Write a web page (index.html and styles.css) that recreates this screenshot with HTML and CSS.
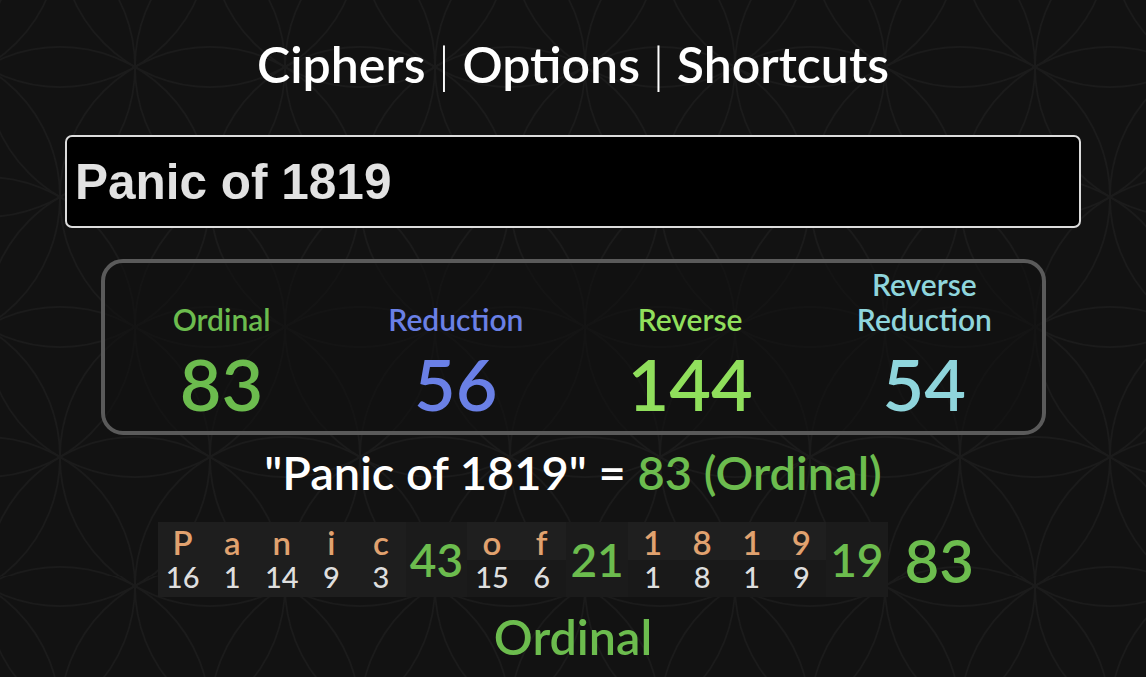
FILE: index.html
```html
<!DOCTYPE html>
<html lang="en">
<head>
<meta charset="utf-8">
<title>Gematria</title>
<link rel="stylesheet" href="styles.css">
</head>
<body>
<main class="page">
  <h1 class="menu">Ciphers <span class="sep">|</span> Options <span class="sep">|</span> Shortcuts</h1>

  <input class="phrase" type="text" value="Panic of 1819">

  <section class="ciphers">
    <div class="cipher ordinal"><div class="c-name">Ordinal</div><div class="c-val">83</div></div>
    <div class="cipher reduction"><div class="c-name">Reduction</div><div class="c-val">56</div></div>
    <div class="cipher reverse"><div class="c-name">Reverse</div><div class="c-val">144</div></div>
    <div class="cipher rev-red"><div class="c-name">Reverse<br>Reduction</div><div class="c-val">54</div></div>
  </section>

  <p class="result">"Panic of 1819" = <span class="green">83 (Ordinal)</span></p>

  <div class="breakdown">
    <div class="word">
      <div class="col"><span class="ch">P</span><span class="nv">16</span></div>
      <div class="col"><span class="ch">a</span><span class="nv">1</span></div>
      <div class="col"><span class="ch">n</span><span class="nv">14</span></div>
      <div class="col"><span class="ch">i</span><span class="nv">9</span></div>
      <div class="col"><span class="ch">c</span><span class="nv">3</span></div>
    </div>
    <div class="sum">43</div>
    <div class="word alt">
      <div class="col"><span class="ch">o</span><span class="nv">15</span></div>
      <div class="col"><span class="ch">f</span><span class="nv">6</span></div>
    </div>
    <div class="sum">21</div>
    <div class="word alt">
      <div class="col"><span class="ch">1</span><span class="nv">1</span></div>
      <div class="col"><span class="ch">8</span><span class="nv">8</span></div>
      <div class="col"><span class="ch">1</span><span class="nv">1</span></div>
      <div class="col"><span class="ch">9</span><span class="nv">9</span></div>
    </div>
    <div class="sum">19</div>
    <div class="total">83</div>
  </div>

  <div class="cipher-title">Ordinal</div>
</main>
</body>
</html>
```

FILE: styles.css
```css
html, body {
  margin: 0;
  padding: 0;
  height: 100%;
}

body {
  background-color: #121212;
  background-image: url("data:image/svg+xml,%3Csvg xmlns='http://www.w3.org/2000/svg' width='150' height='259.81' viewBox='0 0 150 259.81'%3E%3Cg fill='none' stroke='%231b1b1b' stroke-width='1.6'%3E%3Ccircle cx='-150' cy='0' r='150'/%3E%3Ccircle cx='0' cy='0' r='150'/%3E%3Ccircle cx='150' cy='0' r='150'/%3E%3Ccircle cx='300' cy='0' r='150'/%3E%3Ccircle cx='-150' cy='259.81' r='150'/%3E%3Ccircle cx='0' cy='259.81' r='150'/%3E%3Ccircle cx='150' cy='259.81' r='150'/%3E%3Ccircle cx='300' cy='259.81' r='150'/%3E%3Ccircle cx='-75' cy='-129.9' r='150'/%3E%3Ccircle cx='75' cy='-129.9' r='150'/%3E%3Ccircle cx='225' cy='-129.9' r='150'/%3E%3Ccircle cx='-75' cy='129.9' r='150'/%3E%3Ccircle cx='75' cy='129.9' r='150'/%3E%3Ccircle cx='225' cy='129.9' r='150'/%3E%3Ccircle cx='-75' cy='389.7' r='150'/%3E%3Ccircle cx='75' cy='389.7' r='150'/%3E%3Ccircle cx='225' cy='389.7' r='150'/%3E%3C/g%3E%3C/svg%3E");
  background-position: 60px -63px;
  font-family: Lato, "Open Sans", sans-serif;
  color: #fff;
  overflow: hidden;
}

.page {
  display: flex;
  flex-direction: column;
  align-items: center;
  padding-top: 35px;
}

.menu {
  margin: 0;
  font-size: 50px;
  font-weight: 600;
  line-height: 58px;
  color: #fff;
}

.menu .sep {
  font-weight: 300;
}

.phrase {
  box-sizing: border-box;
  margin-top: 42px;
  width: 1016px;
  height: 93px;
  border: 2px solid #dcdcdc;
  border-radius: 7px;
  background: #000;
  color: #e2e2e2;
  font-family: "Liberation Sans", Arial, sans-serif;
  font-weight: bold;
  font-size: 49.5px;
  padding: 0 8px;
  outline: none;
}

.ciphers {
  box-sizing: border-box;
  margin-top: 31px;
  width: 945px;
  border: 4px solid #5a5a5a;
  border-radius: 22px;
  background: rgba(16, 16, 16, 0.6);
  padding: 4px 0 12px;
  display: grid;
  grid-template-columns: repeat(4, 1fr);
}

.cipher {
  display: flex;
  flex-direction: column;
  justify-content: flex-end;
  align-items: center;
  text-align: center;
}

.c-name {
  font-size: 30px;
  font-weight: 600;
  line-height: 35px;
}

.c-val {
  margin-top: 10px;
  font-size: 72px;
  font-weight: 600;
  line-height: 72px;
}

.ordinal { color: #6cbc4e; }
.reduction { color: #6a80e6; }
.reverse { color: #90df5c; }
.rev-red { color: #8fd5dc; }

.result {
  margin: 10px 0 0;
  font-size: 47px;
  font-weight: 600;
  line-height: 54px;
  color: #fff;
}

.green { color: #6cbc4e; }

.breakdown {
  margin-top: 23px;
  display: flex;
  align-items: stretch;
  height: 75px;
}

.word {
  display: flex;
  background: #1e1e1e;
}

.word.alt {
  background: linear-gradient(#1f1f1f 0 38px, #191919 38px 100%);
}

.col {
  width: 49.6px;
  display: grid;
  grid-template-rows: 38px 37px;
}

.ch, .nv {
  display: flex;
  align-items: center;
  justify-content: center;
}

.ch {
  color: #e1a26f;
  font-size: 33px;
  font-weight: 600;
  padding-top: 2px;
}

.nv {
  color: #dedede;
  font-size: 29px;
  font-weight: 500;
  padding-bottom: 4px;
}

.sum {
  display: flex;
  align-items: center;
  justify-content: center;
  padding: 0 4px;
  background: #1b1b1b;
  color: #6cbc4e;
  font-size: 46px;
  font-weight: 600;
}

.total {
  display: flex;
  align-items: center;
  padding: 0 14px 0 17px;
  color: #6cbc4e;
  font-size: 60px;
  font-weight: 600;
}

.cipher-title {
  margin-top: 11px;
  font-size: 48.5px;
  font-weight: 600;
  line-height: 56px;
  color: #6cbc4e;
}
```
